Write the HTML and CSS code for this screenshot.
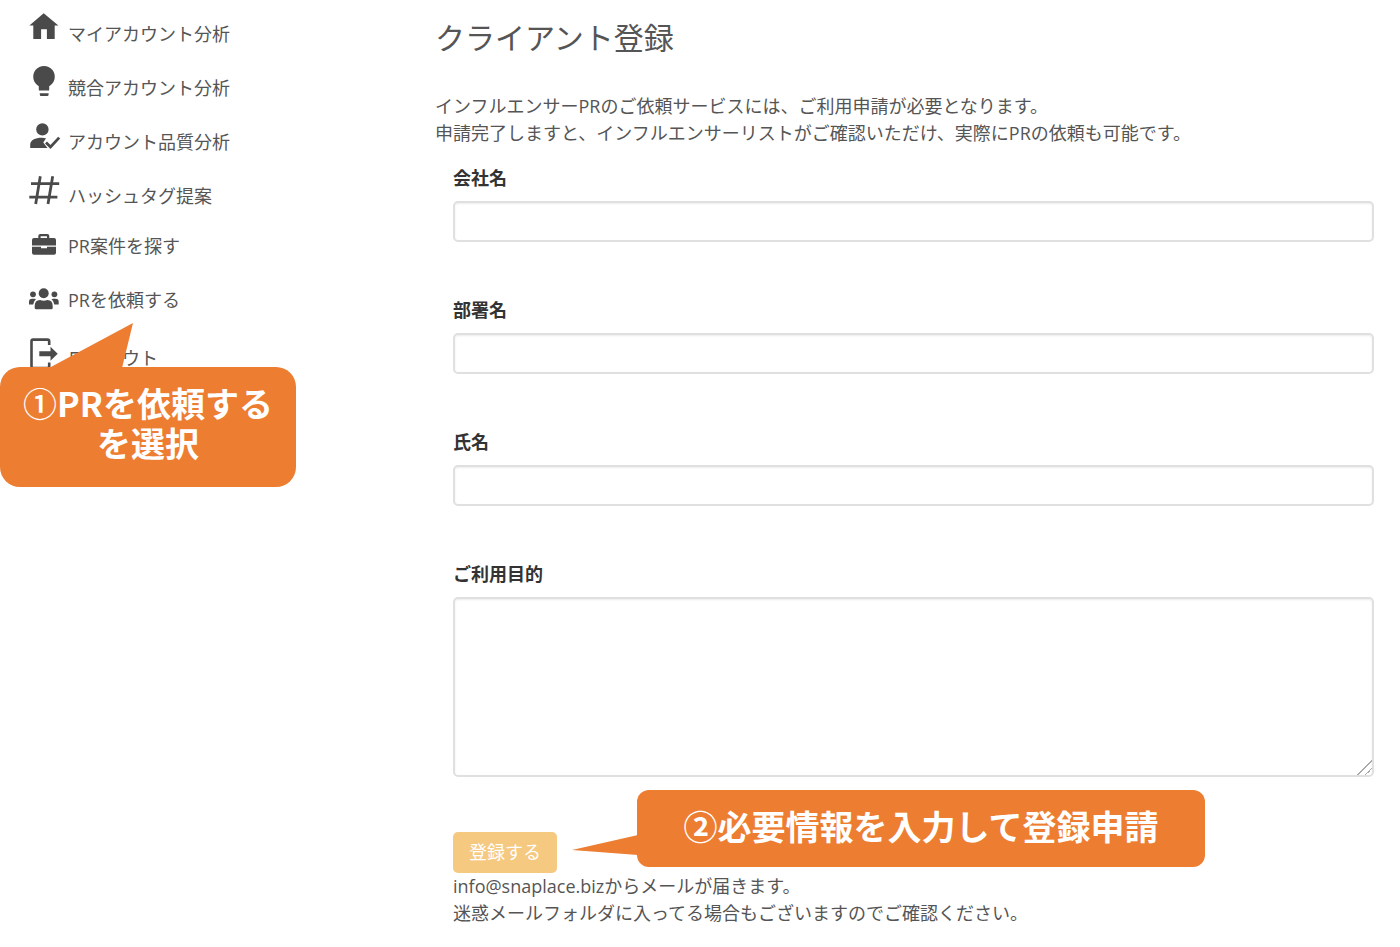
FILE: index.html
```html
<!DOCTYPE html>
<html lang="ja">
<head>
	<title>クライアント登録</title>
	<meta charset="utf-8">
	<meta name="viewport" content="width=device-width, initial-scale=1">

	<link rel="stylesheet" href="styles.css">
</head>

<body>
	<div class="page">
		<aside class="sidebar">
			<nav>
				<ul class="menu">
					<li><a class="menu-item" href="#">
						<svg class="icon" viewBox="0 0 30 30"><path d="M14.7 1.2 29.4 13.6H25.7V27H17.9V17.3H12.1V27H4.3V13.6H.4Z"/></svg>
						<span class="menu-label">マイアカウント分析</span>
					</a></li>
					<li><a class="menu-item" href="#">
						<svg class="icon" viewBox="0 0 30 30"><path d="M9.8 24V20.2A10.8 10.8 0 1 1 20.2 20.2V24Q20.2 24.5 19.5 24.5H10.5Q9.8 24.5 9.8 24ZM10.8 27.3H19.6V28.5Q19.5 30 18.3 30H12Q10.8 30 10.8 28.5Z"/></svg>
						<span class="menu-label">競合アカウント分析</span>
					</a></li>
					<li><a class="menu-item" href="#">
						<svg class="icon" viewBox="0 0 30 30"><circle cx="13.4" cy="9.4" r="6.2"/><path d="M1.2 28V24.5C1.2 20.5 6 17.8 13 17.8Q15 17.8 17 18.3L14.3 22.5 18.5 28Z"/><path class="line" stroke-width="2.8" d="m17 22.5 4.5 4.4 8.7-9.3"/></svg>
						<span class="menu-label">アカウント品質分析</span>
					</a></li>
					<li><a class="menu-item" href="#">
						<svg class="icon" viewBox="0 0 30 30"><path class="line" stroke-width="2.8" d="M11.3 2.3 6.7 30M23.7 2.3 19 30M2 9.7H30.2M.3 23.2H28.4"/></svg>
						<span class="menu-label">ハッシュタグ提案</span>
					</a></li>
					<li><a class="menu-item compact" href="#">
						<svg class="icon" viewBox="0 0 30 30"><path d="M9.3 10V8Q9.3 6 11.3 6H18.3Q20.3 6 20.3 8V10H25Q27 10 27 12V17.5H3V12Q3 10 5 10ZM11.6 10H18V8.2H11.6ZM3 18.8H12V20.3H18V18.8H27V24.7Q27 26.7 25 26.7H5Q3 26.7 3 24.7Z"/></svg>
						<span class="menu-label">PR案件を探す</span>
					</a></li>
					<li><a class="menu-item compact" href="#">
						<svg class="icon" viewBox="0 0 30 30"><circle cx="14.7" cy="11.3" r="5"/><circle cx="4" cy="12.3" r="2.9"/><circle cx="25.4" cy="12.3" r="2.9"/><path d="M5.7 26V24Q5.7 18 11 18Q14.7 19.6 18.4 18Q23.7 18 23.7 24V26Q23.7 27.3 22.3 27.3H7.1Q5.7 27.3 5.7 26ZM0 22.5V20Q0 16.8 3 16.8H5.5Q6.5 16.8 7 17.3Q4.5 19 4.2 22.5ZM29.7 22.5V20Q29.7 16.8 26.7 16.8H24Q23 16.8 22.5 17.3Q25 19 25.3 22.5Z"/></svg>
						<span class="menu-label">PRを依頼する</span>
					</a></li>
					<li><a class="menu-item" href="#">
						<svg class="icon" viewBox="0 0 30 30"><path class="line" stroke-width="2.6" d="M20.2 9V5.5Q20.2 3.6 18.5 3.6H4Q2.5 3.6 2.5 5.5V30Q2.5 32 4 32H18.5Q20.2 32 20.2 30V26.5"/><path d="M10.3 15.2H21.5V10.7L28.7 17.7 21.5 24.7V20.2H10.3Z"/></svg>
						<span class="menu-label">ログアウト</span>
					</a></li>
				</ul>
			</nav>

			<div class="callout callout-menu">
				<svg class="tail tail-up" viewBox="0 0 72 46"><path d="M0 45 84 0 73 45V46H0Z"/></svg>
				<span class="step">①</span>PRを依頼する<br>を選択
			</div>
		</aside>

		<main class="content">
			<h1>クライアント登録</h1>
			<p>インフルエンサーPRのご依頼サービスには、ご利用申請が必要となります。<br>申請完了しますと、インフルエンサーリストがご確認いただけ、実際にPRの依頼も可能です。</p>

			<form class="client-form">
				<div class="field">
					<label for="company">会社名</label>
					<input type="text" id="company">
				</div>
				<div class="field">
					<label for="department">部署名</label>
					<input type="text" id="department">
				</div>
				<div class="field">
					<label for="name">氏名</label>
					<input type="text" id="name">
				</div>
				<div class="field">
					<label for="purpose">ご利用目的</label>
					<textarea id="purpose"></textarea>
				</div>
				<div class="submit-row">
					<button type="button" class="submit">登録する</button>
					<div class="callout callout-submit">
						<svg class="tail tail-left" viewBox="0 0 66 20"><path d="M0 15 66 0V20Z"/></svg>
						②必要情報を入力して登録申請
					</div>
				</div>
				<p>info@snaplace.bizからメールが届きます。<br>迷惑メールフォルダに入ってる場合もございますのでご確認ください。</p>
			</form>
		</main>
	</div>
</body>

</html>
```
FILE: styles.css
```css
* {
	box-sizing: border-box;
}
body {
	margin: 0;
	font-family: "Open Sans", "Noto Sans CJK JP", sans-serif;
	font-size: 18px;
	line-height: 27px;
	color: #555;
	background: #fff;
}
p {
	margin: 0;
}
.page {
	display: grid;
	grid-template-columns: 30% 1fr;
}
.sidebar {
	position: relative;
}
.menu {
	margin: 0;
	padding: 0 0 0 29px;
	list-style: none;
}
.menu-item {
	display: flex;
	align-items: center;
	gap: 9px;
	height: 54px;
	color: #555;
	text-decoration: none;
}
.menu-label {
	padding-top: 14px;
}
.compact .menu-label {
	padding-top: 6px;
}
.icon {
	width: 30px;
	height: 30px;
	overflow: visible;
	fill: #4a4a4a;
}
.line {
	fill: none;
	stroke: #4a4a4a;
}
.content {
	padding: 17px 26px 20px 15px;
}
h1 {
	margin: 0 0 34px;
	font-size: 30px;
	font-weight: 400;
	line-height: 42px;
}
.client-form {
	padding: 18px 0 0 18px;
}
.field {
	display: flex;
	flex-direction: column;
	gap: 9px;
	margin-bottom: 55px;
}
label {
	font-weight: 700;
	color: #333;
}
input,
textarea {
	display: block;
	width: 100%;
	height: 41px;
	padding: 6px 12px;
	font: inherit;
	color: #555;
	background: #fff;
	border: 2px solid #e0e0e0;
	border-radius: 5px;
	box-shadow: inset 0 1px 2px rgba(0, 0, 0, .08);
}
textarea {
	height: 180px;
	resize: vertical;
}
textarea::-webkit-resizer {
	background: linear-gradient(135deg, transparent 49%, #aaa 49%, #aaa 55%, transparent 55%, transparent 74%, #aaa 74%, #aaa 80%, transparent 80%);
}
.submit-row {
	display: flex;
	position: relative;
}
.submit {
	height: 41px;
	padding: 0 16px;
	font: inherit;
	color: #fff;
	background: #f5c97f;
	border: 0;
	border-radius: 5px;
	cursor: pointer;
}
.callout {
	position: absolute;
	font-family: "Noto Sans CJK JP", sans-serif;
	font-size: 34px;
	font-weight: 700;
	line-height: 40px;
	text-align: center;
	white-space: nowrap;
	color: #fff;
	background: #ed7d31;
}
.callout-menu {
	top: 367px;
	left: 0;
	width: 296px;
	padding: 16px 0 24px;
	border-radius: 20px;
}
.callout-submit {
	top: -42px;
	left: 184px;
	width: 568px;
	padding: 16px 0 21px;
	border-radius: 12px;
}
.step {
	font-weight: 500;
}
.tail {
	position: absolute;
	overflow: visible;
	fill: #ed7d31;
}
.tail-up {
	top: -44px;
	left: 49px;
	width: 72px;
	height: 46px;
}
.tail-left {
	top: 45px;
	left: -65px;
	width: 66px;
	height: 20px;
}
```
